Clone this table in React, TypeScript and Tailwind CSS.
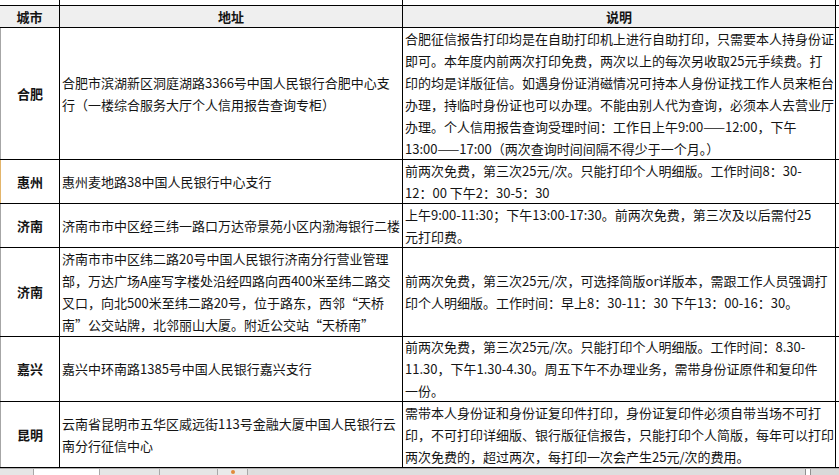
const rows = [
  {
    city: "合肥",
    h: "h-[132px]",
    addr: [
      "合肥市滨湖新区洞庭湖路3366号中国人民银行合肥中心支",
      "行（一楼综合服务大厅个人信用报告查询专柜）",
    ],
    desc: [
      "合肥征信报告打印均是在自助打印机上进行自助打印，只需要本人持身份证",
      "即可。本年度内前两次打印免费，两次以上的每次另收取25元手续费。打",
      "印的均是详版征信。如遇身份证消磁情况可持本人身份证找工作人员来柜台",
      "办理，持临时身份证也可以办理。不能由别人代为查询，必须本人去营业厅",
      "办理。个人信用报告查询受理时间：工作日上午9:00——12:00，下午",
      "13:00——17:00（两次查询时间间隔不得少于一个月。）",
    ],
    edge: "border-l-[#a6a6a6]",
  },
  {
    city: "惠州",
    h: "h-[44px]",
    addr: ["惠州麦地路38中国人民银行中心支行"],
    desc: [
      "前两次免费，第三次25元/次。只能打印个人明细版。工作时间8：30-",
      "12：00 下午2：30-5：30",
    ],
    edge: "border-l-[#e3b56b]",
  },
  {
    city: "济南",
    h: "h-[44px]",
    addr: ["济南市市中区经三纬一路口万达帝景苑小区内渤海银行二楼"],
    desc: [
      "上午9:00-11:30；下午13:00-17:30。前两次免费，第三次及以后需付25",
      "元打印费。",
    ],
    edge: "border-l-[#a6a6a6]",
  },
  {
    city: "济南",
    h: "h-[89px]",
    addr: [
      "济南市市中区纬二路20号中国人民银行济南分行营业管理",
      "部，万达广场A座写字楼处沿经四路向西400米至纬二路交",
      "叉口，向北500米至纬二路20号，位于路东，西邻“天桥",
      "南”公交站牌，北邻丽山大厦。附近公交站“天桥南”",
    ],
    desc: [
      "前两次免费，第三次25元/次，可选择简版or详版本，需跟工作人员强调打",
      "印个人明细版。工作时间：早上8：30-11：30 下午13：00-16：30。",
    ],
    edge: "border-l-[#a6a6a6]",
  },
  {
    city: "嘉兴",
    h: "h-[65px]",
    addr: ["嘉兴中环南路1385号中国人民银行嘉兴支行"],
    desc: [
      "前两次免费，第三次25元/次。只能打印个人明细版。工作时间：8.30-",
      "11.30，下午1.30-4.30。周五下午不办理业务，需带身份证原件和复印件",
      "一份。",
    ],
    edge: "border-l-[#a6a6a6]",
  },
  {
    city: "昆明",
    h: "h-[66px]",
    addr: [
      "云南省昆明市五华区威远街113号金融大厦中国人民银行云",
      "南分行征信中心",
    ],
    desc: [
      "需带本人身份证和身份证复印件打印，身份证复印件必须自带当场不可打",
      "印，不可打印详细版、银行版征信报告，只能打印个人简版，每年可以打印",
      "两次免费的，超过两次，每打印一次会产生25元/次的费用。",
    ],
    edge: "border-l-[#a6a6a6]",
  },
];

const Lines = ({ lines }: { lines: string[] }) => (
  <div className="flex flex-col">
    {lines.map((l, i) => (
      <span key={i} className="block whitespace-nowrap">
        {l}
      </span>
    ))}
  </div>
);

export default function App() {
  return (
    <div
      className="w-[839px] h-[475px] overflow-hidden bg-white text-[13px] leading-[22px] text-[#141414]"
      style={{ fontFamily: '"Noto Sans CJK SC", "Noto Sans", sans-serif' }}
    >
      {/* partial row above the header */}
      <div className="flex h-[6px] border-b border-black">
        <div className="w-[60px] border-r border-black" />
        <div className="w-[343px] border-r border-black" />
        <div className="w-[433px] border-r border-black" />
      </div>

      {/* header */}
      <div className="flex h-[22px] border-b border-black font-bold">
        <div className="w-[60px] border-r border-black bg-[#efefef] flex items-center justify-center">
          城市
        </div>
        <div className="w-[343px] border-r border-black bg-[#efefef] flex items-center justify-center">
          地址
        </div>
        <div className="w-[433px] border-r border-black bg-[#efefef] flex items-center justify-center">
          说明
        </div>
      </div>

      {rows.map((r, i) => (
        <div key={i} className={`flex ${r.h} border-b border-black`}>
          <div
            className={`w-[60px] border-l ${r.edge} border-r border-r-black flex items-center justify-center font-bold`}
          >
            {r.city}
          </div>
          <div className="w-[343px] border-r border-black flex items-center pl-[2px] overflow-hidden">
            <Lines lines={r.addr} />
          </div>
          <div className="w-[433px] border-r border-black flex items-center pl-[2px] overflow-hidden">
            <Lines lines={r.desc} />
          </div>
        </div>
      ))}

      {/* sheet tab strip */}
      <div className="flex h-[8px] bg-[#d9d9d9] border-t border-[#b0b0b0]">
        <div className="w-[34px] border-r border-[#a8a8a8] bg-[#e6e6e6]" />
        <div className="w-[66px] border-r border-[#a8a8a8] bg-white" />
        <div className="w-[60px] border-r border-[#a8a8a8] bg-[#e6e6e6]" />
        <div className="w-[58px] border-r border-[#a8a8a8] bg-[#e6e6e6]" />
        <div className="w-[30px] border-r border-[#a8a8a8] bg-[#eaeaea] flex justify-center">
          <div className="w-[4px] h-[4px] mt-[1px] rounded-full bg-[#e08a3c]" />
        </div>
        <div className="flex-1 bg-[#dedede]" />
        <div className="w-[6px] border-x border-[#909090] bg-white mr-[28px]" />
      </div>
    </div>
  );
}
